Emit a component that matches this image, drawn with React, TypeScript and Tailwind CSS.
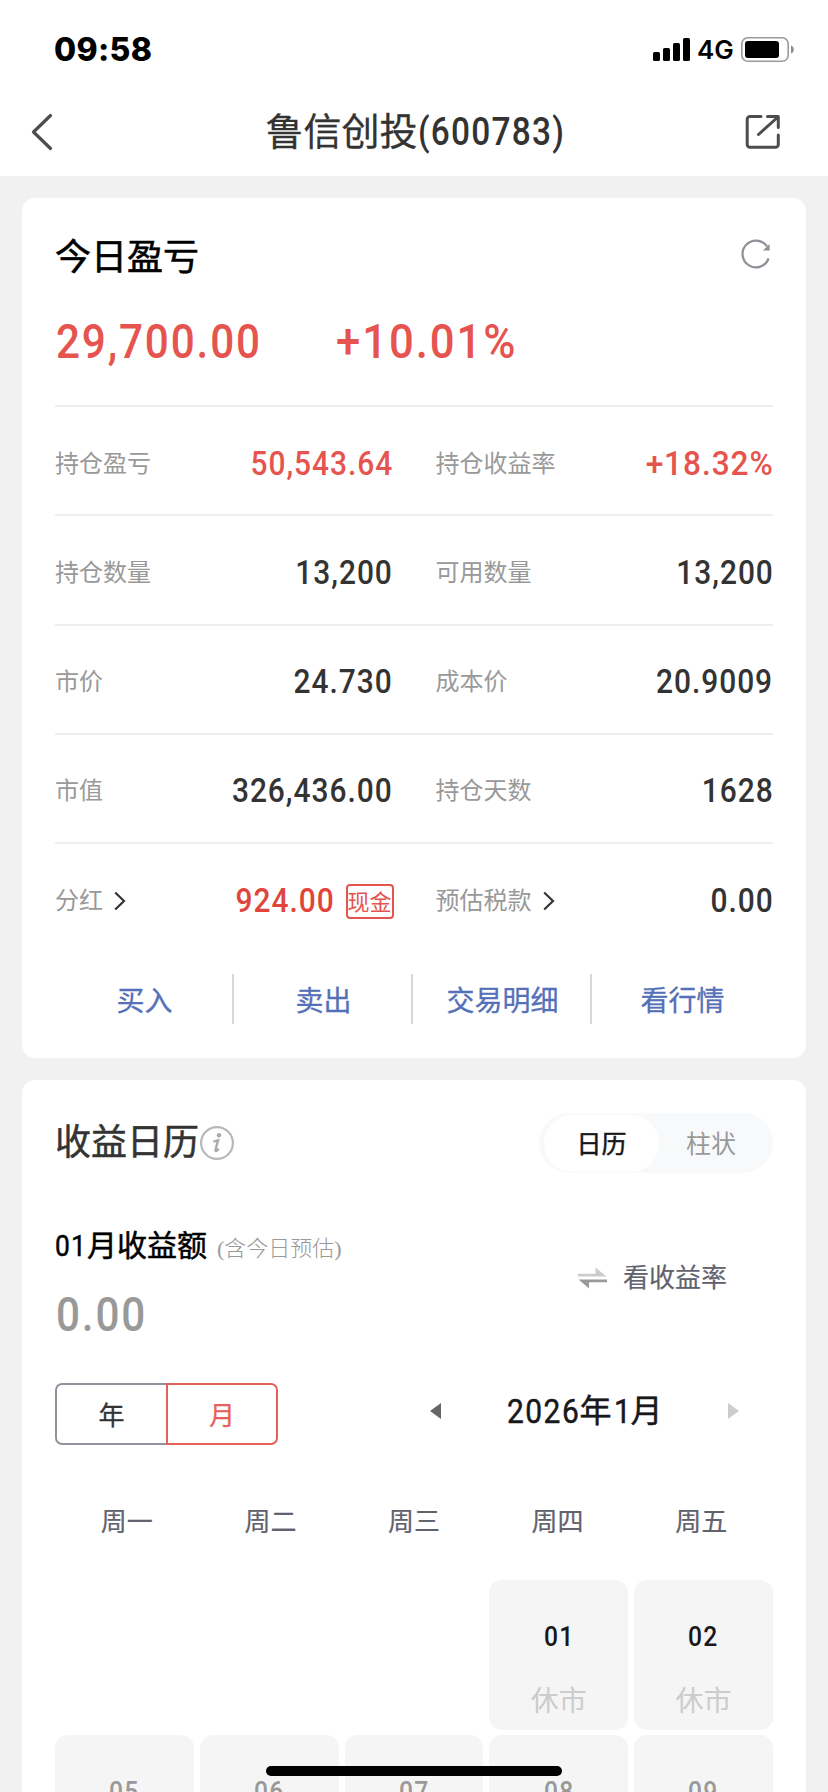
import { useState } from "react";
import clsx from "clsx";

type Field = {
  label: string;
  value: string;
  tone?: "red" | "deepRed";
  link?: boolean;
  tag?: string;
};

const rows: [Field, Field][] = [
  [
    { label: "持仓盈亏", value: "50,543.64", tone: "red" },
    { label: "持仓收益率", value: "+18.32%", tone: "red" },
  ],
  [
    { label: "持仓数量", value: "13,200" },
    { label: "可用数量", value: "13,200" },
  ],
  [
    { label: "市价", value: "24.730" },
    { label: "成本价", value: "20.9009" },
  ],
  [
    { label: "市值", value: "326,436.00" },
    { label: "持仓天数", value: "1628" },
  ],
  [
    { label: "分红", value: "924.00", tone: "deepRed", link: true, tag: "现金" },
    { label: "预估税款", value: "0.00", link: true },
  ],
];

const actions = ["买入", "卖出", "交易明细", "看行情"];
const weekdays = ["周一", "周二", "周三", "周四", "周五"];
const days = [
  { day: "01", closed: true },
  { day: "02", closed: true },
  { day: "05" },
  { day: "06" },
  { day: "07" },
  { day: "08" },
  { day: "09" },
];

function StatusBar() {
  return (
    <div className="flex h-[88px] items-start justify-between pl-[54px] pr-[34px] pt-[37px] font-['Inter',sans-serif] text-black">
      <span className="text-[32px] font-extrabold leading-[26px] tracking-[0.3px]">09:58</span>
      <div className="flex h-[25px] items-center">
        <svg width="37" height="25" viewBox="0 0 37 25">
          <rect x="0" y="15" width="7" height="9" rx="1.6" />
          <rect x="10" y="11" width="7" height="13" rx="1.6" />
          <rect x="20" y="6" width="7" height="18" rx="1.6" />
          <rect x="30" y="1" width="7" height="23" rx="1.6" />
        </svg>
        <span className="ml-[7px] w-[44px] text-[26px] font-semibold leading-[25px]">4G</span>
        <svg width="53" height="25" viewBox="0 0 53 25">
          <rect x="0.8" y="0.8" width="46.4" height="23.4" rx="6" fill="none" stroke="#9a9a9a" strokeWidth="1.6" />
          <rect x="4" y="4" width="34" height="17" rx="3" />
          <path d="M50 8.5c1.7.6 2.8 2.100 2.800 4s-1.100 3.400-2.800 4z" fill="#8e8e8e" />
        </svg>
      </div>
    </div>
  );
}

function NavBar() {
  return (
    <div className="grid h-[88px] grid-cols-[1fr_auto_1fr] items-center pl-[31px] pr-[47px]">
      <svg width="22" height="38" viewBox="0 0 22 38" fill="none" stroke="#4d4d4d" strokeWidth="3.2" strokeLinecap="round" strokeLinejoin="round">
        <path d="M19.500 2.500 2.500 19l17 16.500" />
      </svg>
      <h1 className="ml-[15px] flex w-[296px] items-center whitespace-nowrap text-[38px] leading-none text-[#333] [-webkit-text-stroke:0.3px]">
        鲁信创投
        <span className="inline-block origin-left scale-x-[0.88] font-medium tracking-[1.4px] [-webkit-text-stroke:0px]">(600783)</span>
      </h1>
      <svg width="36" height="36" viewBox="0 0 36 36" className="justify-self-end" fill="none" stroke="#4d4d4d" strokeWidth="3" strokeLinecap="round" strokeLinejoin="round">
        <path d="M16 2.500H5A2.800 2.800 0 0 0 2.200 5.300V30.500A2.800 2.800 0 0 0 5 33.300H30.500A2.800 2.800 0 0 0 33.300 30.500V21" />
        <path d="M22.500 2.500h10.800V13.500M33 3 13.500 20.500" />
      </svg>
    </div>
  );
}

function Chevron() {
  return (
    <svg width="12" height="20" viewBox="0 0 12 20" className="ml-[11px]" fill="none" stroke="#333" strokeWidth="2.200">
      <path d="M1.200 1.500 10 10l-8.800 8.500" />
    </svg>
  );
}

function FieldCell({ field }: { field: Field }) {
  return (
    <div className="flex flex-1 items-center justify-between">
      <span className="mt-0.5 flex items-center text-2xl leading-none text-[#999]">
        {field.label}
        {field.link && <Chevron />}
      </span>
      <span className="flex items-center">
        <span
          className={clsx(
            "inline-block origin-right text-[34px] font-medium leading-none",
            field.value.endsWith("%") ? "scale-x-[0.93] tracking-[1px]" : "scale-x-[0.88] tracking-[1.1px]",
            !field.tag && "-mr-[1.500px]",
            field.tone === "red" && "text-[#e5544e]",
            field.tone === "deepRed" && "text-[#df453d]",
            !field.tone && "text-[#333]"
          )}
        >
          {field.value}
        </span>
        {field.tag && (
          <span className="-mr-0.5 ml-[11px] mt-1 flex h-[35px] w-[48px] items-center justify-center rounded-[4px] border-2 border-[#e5544e] pt-0.5 text-[22px] leading-none text-[#e5544e]">
            <span className="-mx-1 whitespace-nowrap">{field.tag}</span>
          </span>
        )}
      </span>
    </div>
  );
}

function PositionCard() {
  return (
    <section className="h-[860px] shrink-0 rounded-[13px] bg-white px-[33px]">
      <div className="flex h-[116px] items-center justify-between">
        <h2 className="mt-1 text-[36px] leading-none text-black [-webkit-text-stroke:0.6px]">今日盈亏</h2>
        <svg width="30" height="30" viewBox="0 0 30 30" className="-mt-1 mr-[2px]" fill="none" stroke="#8f8f98" strokeWidth="2.2">
          <path d="M27.600 19.400A13.400 13.400 0 1 1 26 7.400" />
          <path d="M28.600 5v6.500H22z" fill="#8f8f98" stroke="none" />
        </svg>
      </div>
      <div className="flex h-[91px] pl-px text-[48px] font-medium leading-[56px] text-[#e5544e]">
        <div className="w-[280px] tracking-[2.1px]">
          <span className="inline-block origin-left scale-x-[0.88]">29,700.00</span>
        </div>
        <span className="inline-block origin-left scale-x-[0.91] tracking-[2.1px]">+10.01%</span>
      </div>
      {rows.map(([left, right]) => (
        <div key={left.label} className="flex h-[109.250px] gap-[44px] border-t-2 border-[#ededed] pr-px pt-1">
          <FieldCell field={left} />
          <FieldCell field={right} />
        </div>
      ))}
      <div className="mt-[23px] flex h-[50px]">
        {actions.map((action, i) => (
          <button
            key={action}
            className={clsx(
              "flex w-[179px] items-center justify-center pl-0.5 pt-[5px] text-[28px] leading-none text-[#5470b8] [-webkit-text-stroke:0.3px]",
              i < actions.length - 1 && "border-r-2 border-[#d8d8d8]"
            )}
          >
            {action}
          </button>
        ))}
      </div>
    </section>
  );
}

function CalendarCard() {
  const [view, setView] = useState("日历");
  const [unit, setUnit] = useState("月");

  return (
    <section className="h-[800px] shrink-0 rounded-t-[13px] bg-white px-[33px] pt-[33px]">
      <div className="flex h-[60px] items-center justify-between">
        <div className="flex items-center">
          <h2 className="text-[36px] leading-none text-[#333] [-webkit-text-stroke:0.5px]">收益日历</h2>
          <svg width="34" height="34" viewBox="0 0 34 34" className="ml-[1px]" fill="none">
            <circle cx="17" cy="17" r="15.900" stroke="#b8b8b8" strokeWidth="2.2" />
            <circle cx="19" cy="9.200" r="2.200" fill="#aaa" />
            <path d="M13.500 15.500c1.800-.3 3.300-.8 4.600-1.200l-2.600 9.500c-.3 1.300.4 1.500 1.300.9.700-.5 1.300-1.200 1.900-2" stroke="#aaa" strokeWidth="2.4" />
          </svg>
        </div>
        <div className="flex h-[60px] w-[234px] items-center rounded-full bg-[#f8f9fb] pl-[5px]">
          {["日历", "柱状"].map((name) => (
            <button
              key={name}
              onClick={() => setView(name)}
              className={clsx(
                "flex h-[57px] items-center justify-center rounded-full pt-0.5 text-[25px] leading-none",
                view === name
                  ? "w-[115px] bg-white text-[#17171c] [-webkit-text-stroke:0.5px]"
                  : "w-[104px] text-[#999]"
              )}
            >
              {name}
            </button>
          ))}
        </div>
      </div>

      {/* month summary */}
      <div className="mt-[52px] flex h-[130px] justify-between">
        <div>
          <div className="flex h-[42px] items-center leading-none">
            <span className="flex items-center text-[30px] text-black [-webkit-text-stroke:0.5px]">
              <span className="w-[32px]">
                <span className="inline-block origin-left scale-x-[0.88] tracking-[1.4px]">01</span>
              </span>
              月收益额
            </span>
            <span className="ml-[10px] mt-1.5 font-['Liberation_Serif','Noto_Sans_CJK_SC',serif] text-[22px] font-light text-[#999]">
              (含今日预估)
            </span>
          </div>
          <div className="mt-[20px] pl-px text-[48px] font-medium leading-[56px] tracking-[2.1px] text-[#999]">
            <span className="inline-block origin-left scale-x-[0.88]">0.00</span>
          </div>
        </div>
        <button className="mr-[46px] mt-[32px] flex h-[42px] items-center text-[26px] leading-none text-[#62626f] [-webkit-text-stroke:0.2px]">
          <svg width="29" height="22" viewBox="0 0 29 22" className="mr-[16px]">
            <path d="M0 9.500V6.800H17.500V.5L28.500 9.500z" fill="#ccc" />
            <path d="M29 12.500v2.700H11v6.300L.5 12.500z" fill="#999" />
          </svg>
          看收益率
        </button>
      </div>

      <div className="mt-[28px] flex h-[62px] items-center justify-between">
        <div className="flex h-[62px] w-[223px]">
          {["年", "月"].map((name, i) => (
            <button
              key={name}
              onClick={() => setUnit(name)}
              className={clsx(
                "flex items-center justify-center border-2 pt-1 text-[26px] leading-none [-webkit-text-stroke:0.3px]",
                i === 0 ? "w-[113px] rounded-l-[7px]" : "-ml-0.5 w-[112px] rounded-r-[7px]",
                unit === name ? "z-10 border-[#e5605a] text-[#e5605a]" : "border-[#92929c] text-[#333]"
              )}
            >
              {name}
            </button>
          ))}
        </div>
        <div className="mr-[34px] flex h-[56px] w-[309px] items-center justify-between pb-[7px]">
          <svg width="11" height="16" viewBox="0 0 11 16">
            <path d="M11 0v16L0 8z" fill="#666" />
          </svg>
          <div className="flex h-8 w-[156px] items-center text-[32px] leading-none text-[#17171c] [-webkit-text-stroke:0.5px]">
            <span className="w-[73px]">
              <span className="inline-block origin-left scale-x-[0.88] text-[34px] tracking-[1.7px]">2026</span>
            </span>
            年
            <span className="w-[19px] pl-0.5">
              <span className="inline-block origin-left scale-x-[0.88] text-[34px]">1</span>
            </span>
            月
          </div>
          <svg width="11" height="16" viewBox="0 0 11 16">
            <path d="M0 0v16l11-8z" fill="#ccc" />
          </svg>
        </div>
      </div>

      <div className="mt-[51px] grid h-[52px] grid-cols-5">
        {weekdays.map((name) => (
          <div key={name} className="flex items-center justify-center text-[26px] leading-none text-[#62626f] [-webkit-text-stroke:0.2px]">
            {name}
          </div>
        ))}
      </div>

      <div className="mt-[32px] grid grid-cols-5 gap-x-1.5 gap-y-[5px]">
        {days.map(({ day, closed }) => (
          <div
            key={day}
            className={clsx(
              "flex h-[150px] flex-col items-center rounded-[13px] bg-[#f5f5f5] pt-[43px] leading-none",
              day === "01" && "col-start-4"
            )}
          >
            <span className={clsx("scale-x-[0.88] text-[28px] font-medium tracking-[1.3px]", closed ? "text-[#17171c]" : "text-[#999]")}>
              {day}
            </span>
            {closed && <span className="mt-[37px] text-[28px] text-[#ccc]">休市</span>}
          </div>
        ))}
      </div>
    </section>
  );
}

export default function App() {
  return (
    <div className="relative h-screen w-[828px] overflow-hidden bg-[#f1f1f1] font-['Roboto','Noto_Sans_CJK_SC',sans-serif]">
      <header className="h-[176px] bg-white">
        <StatusBar />
        <NavBar />
      </header>
      <main className="flex flex-col gap-[22px] p-[22px]">
        <PositionCard />
        <CalendarCard />
      </main>
      {/* home indicator */}
      <div className="absolute bottom-4 left-[266px] h-[10px] w-[296px] rounded-full bg-black" />
    </div>
  );
}
